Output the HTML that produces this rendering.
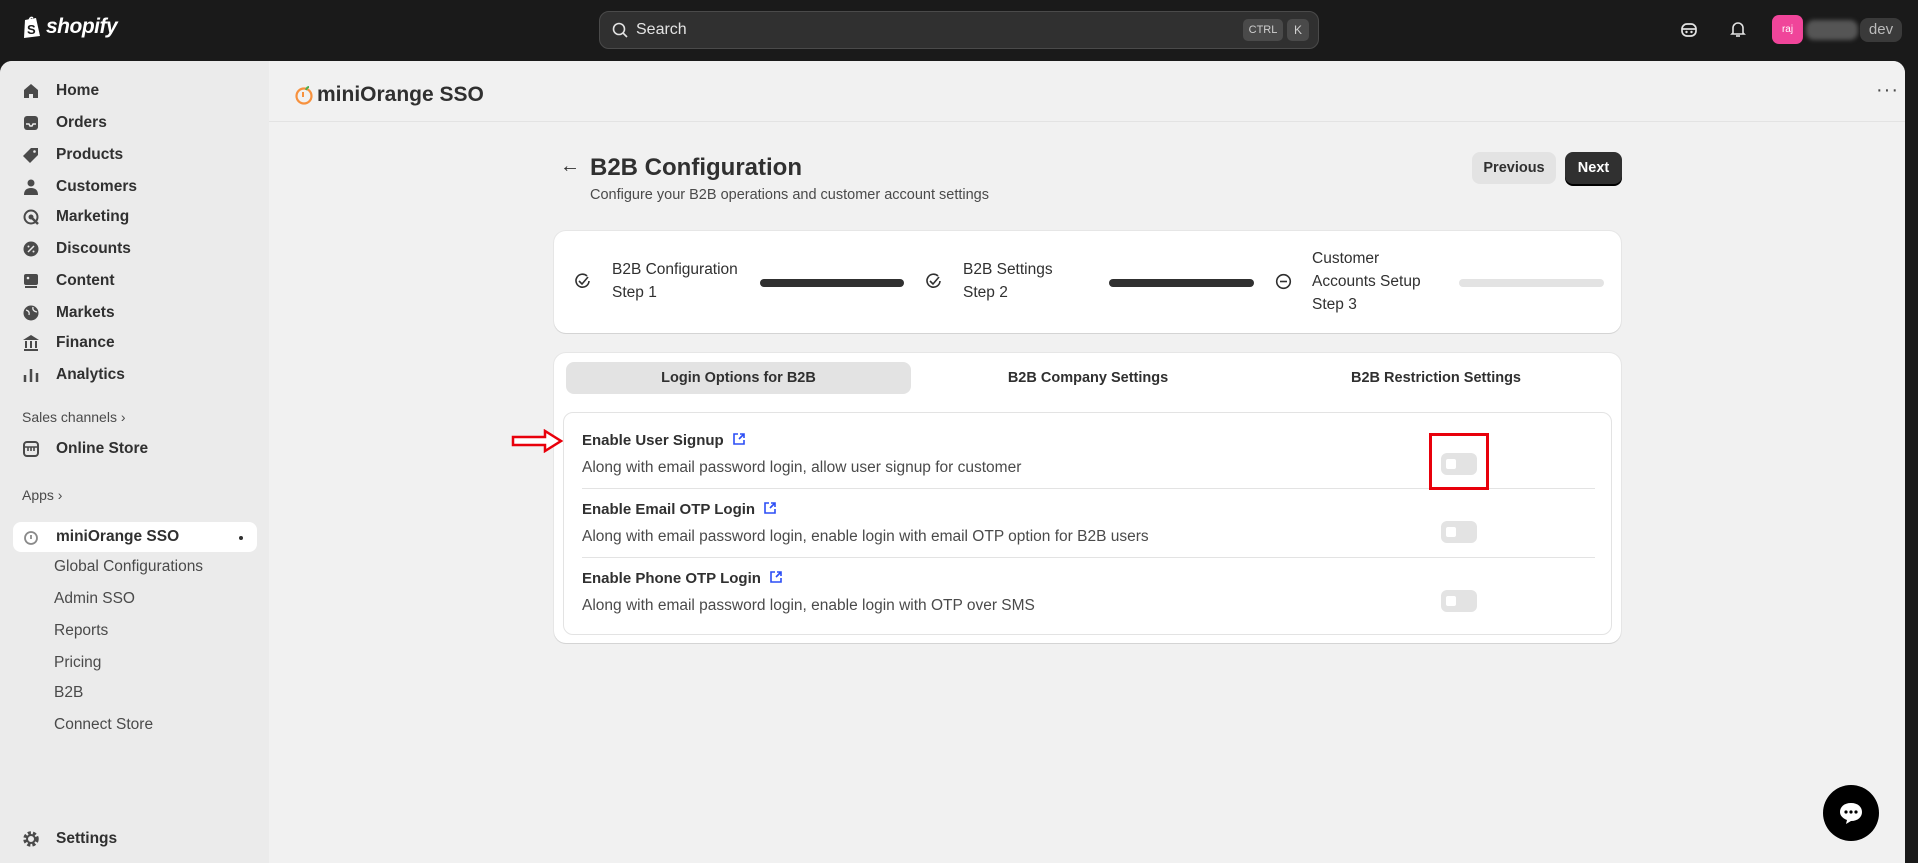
<!DOCTYPE html>
<html><head><meta charset="utf-8"><style>
*{box-sizing:border-box;margin:0;padding:0}
body{width:1918px;height:863px;overflow:hidden;background:#1a1a1a;font-family:"Liberation Sans",sans-serif;position:relative;color:#303030}
.a{position:absolute}
.frame{position:absolute;left:0;top:61px;width:1905px;height:802px;background:#f1f1f1;border-radius:12px 12px 0 0;overflow:hidden}
.side{position:absolute;left:0;top:0;width:269px;height:802px;background:#ebebeb}
.nav{position:absolute;left:22px;font-size:15.5px;font-weight:bold;color:#303030;display:flex;align-items:center;gap:0}
.nav svg{width:18px;height:18px;margin-right:16px}
.sub{position:absolute;left:54px;font-size:15.5px;color:#4a4a4a}
.sec{position:absolute;left:22px;font-size:14px;color:#616161;font-weight:bold}
.card{position:absolute;background:#fff;border-radius:12px;box-shadow:0 1px 0 #d4d4d4,0 0 0 1px #e6e6e6}
.t{position:absolute;font-size:15.5px;color:#303030;line-height:23px}
.bar{position:absolute;height:8px;border-radius:4px;background:#303030}
.tab{position:absolute;top:9px;height:32px;font-size:14.5px;font-weight:bold;color:#303030;display:flex;align-items:center;justify-content:center}
.rt{position:absolute;left:18px;font-size:15px;font-weight:bold;color:#303030}
.rd{position:absolute;left:18px;font-size:15.5px;color:#4a4a4a}
.tg{position:absolute;left:877px;width:36px;height:22px;border-radius:6px;background:#e3e3e3}
.tg::after{content:"";position:absolute;left:5px;top:6px;width:10px;height:10px;border-radius:2px;background:#fff}
.sep{position:absolute;left:18px;width:1013px;height:1px;background:#e3e3e3}
</style></head><body>
<div class="a" style="left:22px;top:15px;display:flex;align-items:center;gap:4px">
<svg width="20" height="24" viewBox="0 0 20 24"><path d="M3 5 L14 3 L18 21 L2 23 Z" fill="#fff"/><path d="M7 6 Q8 1 11 3" stroke="#fff" fill="none" stroke-width="1.5"/><text x="5" y="19" font-size="13" font-weight="bold" fill="#1a1a1a" font-family="Liberation Sans">S</text></svg>
<span style="color:#fff;font-weight:bold;font-style:italic;font-size:21px;letter-spacing:-0.5px">shopify</span></div>
<div class="a" style="left:599px;top:11px;width:720px;height:38px;background:#303030;border:1px solid #4a4a4a;border-radius:10px">
<svg class="a" style="left:12px;top:10px" width="17" height="17" viewBox="0 0 17 17"><circle cx="7" cy="7" r="5.5" stroke="#e3e3e3" stroke-width="1.6" fill="none"/><path d="M11 11 L15 15" stroke="#e3e3e3" stroke-width="1.6"/></svg>
<span class="a" style="left:36px;top:9px;color:#e3e3e3;font-size:16px">Search</span>
<span class="a" style="left:643px;top:7px;width:40px;height:22px;background:#4a4a4a;border-radius:5px;color:#cfcfcf;font-size:11px;text-align:center;line-height:22px">CTRL</span>
<span class="a" style="left:687px;top:7px;width:22px;height:22px;background:#4a4a4a;border-radius:5px;color:#cfcfcf;font-size:12px;text-align:center;line-height:22px">K</span>
</div>
<svg class="a" style="left:1679px;top:20px" width="20" height="20" viewBox="0 0 20 20"><rect x="3" y="4" width="14" height="12" rx="5" stroke="#e3e3e3" stroke-width="1.7" fill="none"/><path d="M3 9 H17" stroke="#e3e3e3" stroke-width="1.7"/><circle cx="7.5" cy="12" r="1.2" fill="#e3e3e3"/><circle cx="12.5" cy="12" r="1.2" fill="#e3e3e3"/></svg>
<svg class="a" style="left:1728px;top:19px" width="20" height="20" viewBox="0 0 20 20"><path d="M5 14 V9 A5 5 0 0 1 15 9 V14 L16 15 H4 Z" stroke="#e3e3e3" stroke-width="1.6" fill="none"/><path d="M8 17 H12" stroke="#e3e3e3" stroke-width="1.6"/></svg>
<div class="a" style="left:1772px;top:15px;width:31px;height:29px;border-radius:7px;background:#f0459a;color:#fff;font-size:10px;text-align:center;line-height:29px">raj</div>
<div class="a" style="left:1806px;top:20px;width:52px;height:20px;border-radius:8px;background:#555;filter:blur(2px)"></div>
<div class="a" style="left:1860px;top:18px;width:42px;height:24px;border-radius:8px;background:#3a3a3a;color:#bbb;font-size:15px;text-align:center;line-height:24px">dev</div>

<div class="frame">
<div class="side">
<div class="nav" style="top:21px"><svg viewBox="0 0 18 18"><path d="M2 8 L9 2 L16 8 V16 H11 V12 H7 V16 H2Z" fill="#4a4a4a"/></svg>Home</div>
<div class="nav" style="top:53px"><svg viewBox="0 0 18 18"><rect x="2" y="2" width="14" height="14" rx="3" fill="#4a4a4a"/><path d="M4 10 H7 L8 12 H10 L11 10 H14" stroke="#ebebeb" stroke-width="1.5" fill="none"/></svg>Orders</div>
<div class="nav" style="top:85px"><svg viewBox="0 0 18 18"><path d="M9 2 H16 V9 L8 17 L1 10Z" fill="#4a4a4a"/><circle cx="12.5" cy="5.5" r="1.3" fill="#ebebeb"/></svg>Products</div>
<div class="nav" style="top:117px"><svg viewBox="0 0 18 18"><circle cx="9" cy="5" r="3.5" fill="#4a4a4a"/><path d="M2 17 Q2 10 9 10 Q16 10 16 17Z" fill="#4a4a4a"/></svg>Customers</div>
<div class="nav" style="top:147px"><svg viewBox="0 0 18 18"><circle cx="9" cy="9" r="6.5" stroke="#4a4a4a" stroke-width="2" fill="none"/><circle cx="9" cy="9" r="2.5" fill="#4a4a4a"/><path d="M10 10 L16 16" stroke="#4a4a4a" stroke-width="2.5"/></svg>Marketing</div>
<div class="nav" style="top:179px"><svg viewBox="0 0 18 18"><circle cx="9" cy="9" r="7.5" fill="#4a4a4a"/><path d="M6 12 L12 6" stroke="#ebebeb" stroke-width="1.5"/><circle cx="6.5" cy="6.5" r="1" fill="#ebebeb"/><circle cx="11.5" cy="11.5" r="1" fill="#ebebeb"/></svg>Discounts</div>
<div class="nav" style="top:211px"><svg viewBox="0 0 18 18"><rect x="2" y="2" width="14" height="11" rx="2" fill="#4a4a4a"/><path d="M3 15 H15" stroke="#4a4a4a" stroke-width="2"/><circle cx="6" cy="6" r="1.3" fill="#ebebeb"/></svg>Content</div>
<div class="nav" style="top:243px"><svg viewBox="0 0 18 18"><circle cx="9" cy="9" r="7.5" fill="#4a4a4a"/><path d="M4 6 Q8 7 7 11 M11 3 Q10 7 15 8" stroke="#ebebeb" stroke-width="1.3" fill="none"/></svg>Markets</div>
<div class="nav" style="top:273px"><svg viewBox="0 0 18 18"><path d="M9 1 L17 6 H1Z M2 15 H16 V17 H2Z" fill="#4a4a4a"/><path d="M4 7 V14 M9 7 V14 M14 7 V14" stroke="#4a4a4a" stroke-width="2"/></svg>Finance</div>
<div class="nav" style="top:305px"><svg viewBox="0 0 18 18"><path d="M3 9 V16 M9 3 V16 M15 7 V16" stroke="#4a4a4a" stroke-width="2.5"/></svg>Analytics</div>
<div class="sec" style="top:348px;font-weight:normal;color:#4a4a4a">Sales channels ›</div>
<div class="nav" style="top:379px"><svg viewBox="0 0 18 18"><rect x="2" y="2" width="14" height="14" rx="3" stroke="#4a4a4a" stroke-width="2" fill="none"/><path d="M2 7 H16 M6 7 V11 M9 7 V11 M12 7 V11" stroke="#4a4a4a" stroke-width="1.6"/></svg>Online Store</div>
<div class="sec" style="top:426px;font-weight:normal;color:#4a4a4a">Apps ›</div>
<div class="a" style="left:13px;top:461px;width:244px;height:30px;background:#fff;border-radius:8px"></div>
<div class="nav" style="top:467px"><svg viewBox="0 0 18 18"><circle cx="9" cy="10" r="6" stroke="#8a8a8a" stroke-width="1.8" fill="none"/><path d="M9 7 V11" stroke="#8a8a8a" stroke-width="1.8"/></svg>miniOrange SSO</div>
<div class="a" style="left:239px;top:475px;width:4px;height:4px;border-radius:2px;background:#303030"></div>
<div class="sub" style="top:497px">Global Configurations</div>
<div class="sub" style="top:529px">Admin SSO</div>
<div class="sub" style="top:561px">Reports</div>
<div class="sub" style="top:593px">Pricing</div>
<div class="sub" style="top:623px">B2B</div>
<div class="sub" style="top:655px">Connect Store</div>
<div class="nav" style="top:769px"><svg viewBox="0 0 18 18"><circle cx="9" cy="9" r="6" stroke="#4a4a4a" stroke-width="3.5" stroke-dasharray="3 2" fill="none"/><circle cx="9" cy="9" r="4" stroke="#4a4a4a" stroke-width="2" fill="none"/></svg>Settings</div>
</div>
<div class="a" style="left:269px;top:0;width:1636px;height:61px;border-bottom:1px solid #e3e3e3;background:#f1f1f1"></div>
<svg class="a" style="left:294px;top:24px" width="20" height="20" viewBox="0 0 20 20"><circle cx="10" cy="11" r="7.5" stroke="#f7913d" stroke-width="2.2" fill="none"/><path d="M9 7 V12" stroke="#f7913d" stroke-width="2"/><path d="M12 5 Q13 2 15 2" stroke="#4caf50" stroke-width="2" fill="none"/></svg>
<div class="a" style="left:317px;top:22px;font-size:21px;color:#303030;font-weight:bold">miniOrange SSO</div>
<div class="a" style="left:1876px;top:18px;font-size:20px;color:#4a4a4a;letter-spacing:1px">···</div>

<div class="a" style="left:560px;top:94px;font-size:20px;color:#303030">←</div>
<div class="a" style="left:590px;top:93px;font-size:24px;font-weight:bold;color:#303030">B2B Configuration</div>
<div class="a" style="left:590px;top:126px;font-size:14.5px;color:#4a4a4a">Configure your B2B operations and customer account settings</div>
<div class="a" style="left:1472px;top:91px;width:84px;height:32px;background:#e3e3e3;border-radius:8px;font-size:14.5px;font-weight:bold;text-align:center;line-height:32px">Previous</div>
<div class="a" style="left:1565px;top:91px;width:57px;height:32px;background:#303030;border-radius:8px;font-size:14.5px;font-weight:bold;color:#fff;text-align:center;line-height:32px;box-shadow:0 2px 0 #000">Next</div>

<div class="card" style="left:554px;top:170px;width:1067px;height:102px">
<svg class="a" style="left:20px;top:42px" width="17" height="17" viewBox="0 0 17 17"><path d="M13 3 A6.5 6.5 0 1 0 15 8" stroke="#303030" stroke-width="1.6" fill="none"/><path d="M5 8 L8 11 L14 4" stroke="#303030" stroke-width="1.6" fill="none"/></svg>
<div class="t" style="left:58px;top:27px">B2B Configuration<br>Step 1</div>
<div class="bar" style="left:206px;top:48px;width:144px"></div>
<svg class="a" style="left:371px;top:42px" width="17" height="17" viewBox="0 0 17 17"><path d="M13 3 A6.5 6.5 0 1 0 15 8" stroke="#303030" stroke-width="1.6" fill="none"/><path d="M5 8 L8 11 L14 4" stroke="#303030" stroke-width="1.6" fill="none"/></svg>
<div class="t" style="left:409px;top:27px">B2B Settings<br>Step 2</div>
<div class="bar" style="left:555px;top:48px;width:145px"></div>
<svg class="a" style="left:721px;top:42px" width="17" height="17" viewBox="0 0 17 17"><circle cx="8.5" cy="8.5" r="6.8" stroke="#303030" stroke-width="1.6" fill="none"/><path d="M5 8.5 H12" stroke="#303030" stroke-width="1.6"/></svg>
<div class="t" style="left:758px;top:16px">Customer<br>Accounts Setup<br>Step 3</div>
<div class="bar" style="left:905px;top:48px;width:145px;background:#e3e3e3"></div>
</div>

<div class="card" style="left:554px;top:292px;width:1067px;height:290px">
<div class="a" style="left:12px;top:9px;width:345px;height:32px;background:#e3e3e3;border-radius:8px"></div>
<div class="tab" style="left:12px;width:345px">Login Options for B2B</div>
<div class="tab" style="left:390px;width:288px">B2B Company Settings</div>
<div class="tab" style="left:738px;width:288px">B2B Restriction Settings</div>
<div class="a" style="left:9px;top:59px;width:1049px;height:223px;border:1px solid #e3e3e3;border-radius:10px">
<div class="rt" style="top:19px">Enable User Signup <svg width="14" height="14" viewBox="0 0 14 14" style="vertical-align:-1px;margin-left:4px"><path d="M6 2 H2 V12 H12 V8" stroke="#2c4ef5" stroke-width="1.6" fill="none"/><path d="M7 7 L12 2 M8 2 H12 V6" stroke="#2c4ef5" stroke-width="1.6" fill="none"/></svg></div>
<div class="rd" style="top:46px">Along with email password login, allow user signup for customer</div>
<div class="tg" style="top:40px"></div>
<div class="sep" style="top:75px"></div>
<div class="rt" style="top:88px">Enable Email OTP Login <svg width="14" height="14" viewBox="0 0 14 14" style="vertical-align:-1px;margin-left:4px"><path d="M6 2 H2 V12 H12 V8" stroke="#2c4ef5" stroke-width="1.6" fill="none"/><path d="M7 7 L12 2 M8 2 H12 V6" stroke="#2c4ef5" stroke-width="1.6" fill="none"/></svg></div>
<div class="rd" style="top:115px">Along with email password login, enable login with email OTP option for B2B users</div>
<div class="tg" style="top:108px"></div>
<div class="sep" style="top:144px"></div>
<div class="rt" style="top:157px">Enable Phone OTP Login <svg width="14" height="14" viewBox="0 0 14 14" style="vertical-align:-1px;margin-left:4px"><path d="M6 2 H2 V12 H12 V8" stroke="#2c4ef5" stroke-width="1.6" fill="none"/><path d="M7 7 L12 2 M8 2 H12 V6" stroke="#2c4ef5" stroke-width="1.6" fill="none"/></svg></div>
<div class="rd" style="top:184px">Along with email password login, enable login with OTP over SMS</div>
<div class="tg" style="top:177px"></div>
</div>
</div>
<div class="a" style="left:1429px;top:372px;width:60px;height:57px;border:3px solid #e8000b"></div>
<svg class="a" style="left:511px;top:368px" width="52" height="24" viewBox="0 0 52 24"><path d="M2 8 H34 V2 L50 12 L34 22 V16 H2 Z" stroke="#e8000b" stroke-width="2.5" fill="#fff"/></svg>

<div class="a" style="left:1823px;top:724px;width:56px;height:56px;border-radius:28px;background:#000">
<svg class="a" style="left:14px;top:14px" width="28" height="28" viewBox="0 0 28 28"><path d="M14 4 C21 4 25 8 25 13 C25 18 21 22 14 22 L9 25 L10 21 C5 19 3 16 3 13 C3 8 7 4 14 4Z" fill="#fff"/><circle cx="9" cy="13" r="1.6"/><circle cx="14" cy="13" r="1.6"/><circle cx="19" cy="13" r="1.6"/></svg>
</div>
</div>
</body></html>
